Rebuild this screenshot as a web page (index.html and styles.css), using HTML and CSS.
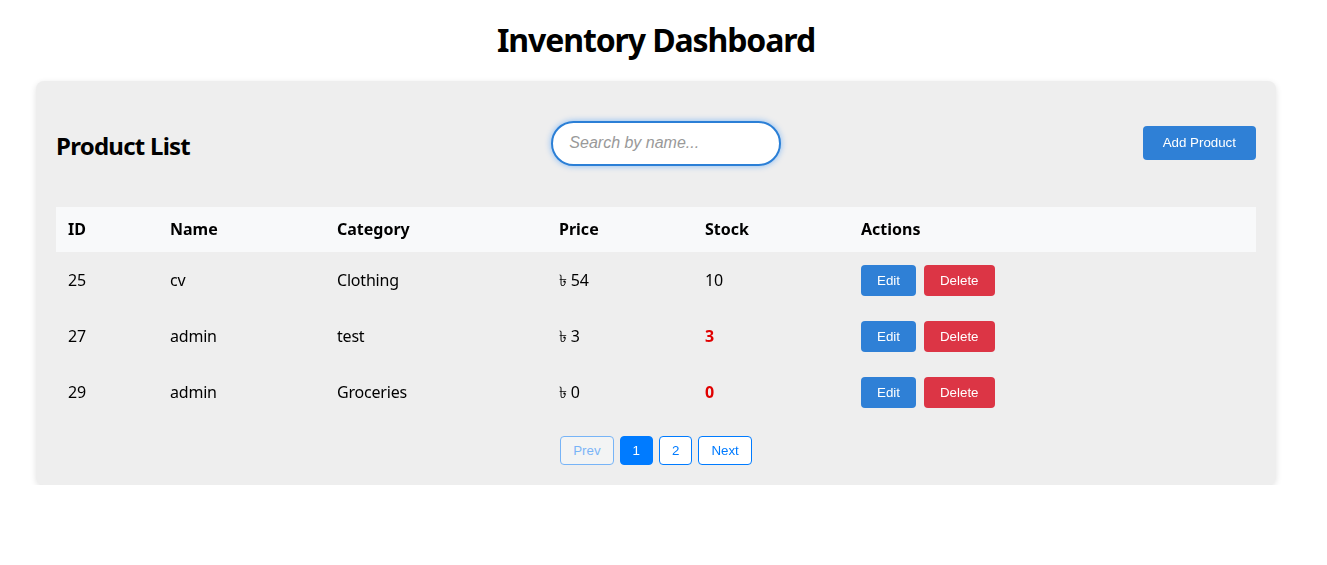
FILE: index.html
```html
<!DOCTYPE html>
<html lang="en">
<head>
<meta charset="utf-8">
<title>Inventory Dashboard</title>
<link rel="stylesheet" href="styles.css">
</head>
<body>
<div class="page">
  <h1 class="title">Inventory Dashboard</h1>
  <div class="card">
    <div class="card-header">
      <h2 class="card-title">Product List</h2>
      <input class="search" type="text" placeholder="Search by name..." autofocus>
      <button class="btn btn-add">Add Product</button>
    </div>
    <table class="table">
      <colgroup>
        <col class="c-id"><col class="c-name"><col class="c-cat"><col class="c-price"><col class="c-stock"><col class="c-act">
      </colgroup>
      <thead>
        <tr><th>ID</th><th>Name</th><th>Category</th><th>Price</th><th>Stock</th><th>Actions</th></tr>
      </thead>
      <tbody>
        <tr>
          <td>25</td><td>cv</td><td>Clothing</td><td>৳ 54</td><td>10</td>
          <td><div class="actions"><button class="btn btn-edit">Edit</button><button class="btn btn-delete">Delete</button></div></td>
        </tr>
        <tr>
          <td>27</td><td>admin</td><td>test</td><td>৳ 3</td><td class="low">3</td>
          <td><div class="actions"><button class="btn btn-edit">Edit</button><button class="btn btn-delete">Delete</button></div></td>
        </tr>
        <tr>
          <td>29</td><td>admin</td><td>Groceries</td><td>৳ 0</td><td class="low">0</td>
          <td><div class="actions"><button class="btn btn-edit">Edit</button><button class="btn btn-delete">Delete</button></div></td>
        </tr>
      </tbody>
    </table>
    <div class="pagination">
      <button class="page-btn" disabled>Prev</button>
      <button class="page-btn active">1</button>
      <button class="page-btn">2</button>
      <button class="page-btn">Next</button>
    </div>
  </div>
</div>
</body>
</html>
```

FILE: styles.css
```css
* { box-sizing: border-box; }
html, body { margin: 0; padding: 0; background: #fff; }
body {
  font-family: "Noto Sans", "Open Sans", sans-serif;
  color: #000;
}
.page {
  width: 1312px;
  padding-top: 19px;
}
.title {
  margin: 0 0 20px;
  text-align: center;
  font-size: 32px;
  line-height: 42px;
  font-weight: 700;
  letter-spacing: -1.1px;
}
.card {
  width: 1240px;
  margin: 0 auto;
  background: #eeeeee;
  border-radius: 8px;
  box-shadow: 0 2px 6px rgba(0,0,0,0.12);
  padding: 20px;
}
.card-header {
  display: flex;
  align-items: center;
  justify-content: space-between;
  height: 86px;
  margin-bottom: 20px;
}
.card-title {
  margin: 0;
  font-size: 24px;
  font-weight: 700;
  letter-spacing: -0.75px;
  padding-top: 2px;
}
.search {
  width: 230px;
  height: 45px;
  border: 2px solid #2b7fd6;
  border-radius: 25px;
  padding: 0 16px;
  font-family: "Liberation Sans", Arial, sans-serif;
  font-size: 16px;
  outline: none;
  box-shadow: 0 0 6px rgba(0,123,255,0.45);
  background: #fff;
  margin-top: -2px;
}
.search::placeholder { color: #999; font-style: italic; }
.btn {
  font-family: "Liberation Sans", Arial, sans-serif;
  font-size: 13.333px;
  line-height: 15px;
  color: #fff;
  border: none;
  border-radius: 4px;
  cursor: pointer;
}
.btn-add {
  background: #2f80d6;
  padding: 9.5px 20px;
  margin-top: -3px;
}
.table {
  width: 100%;
  border-collapse: collapse;
  table-layout: fixed;
  font-size: 16px;
}
.c-id { width: 102px; }
.c-name { width: 167px; }
.c-cat { width: 222px; }
.c-price { width: 146px; }
.c-stock { width: 156px; }
.c-act { width: auto; }
.table th {
  background: #f8f9fa;
  text-align: left;
  font-weight: 700;
  padding: 12px;
  line-height: 21px;
  border-bottom: 1px solid #eeeeee;
}
.table td {
  padding: 12px;
  line-height: 21px;
  border-bottom: 1px solid #eeeeee;
  vertical-align: middle;
  letter-spacing: -0.2px;
}
.table td.low { color: #e00000; font-weight: 700; }
.actions { display: flex; gap: 8px; }
.btn-edit { background: #2f80d6; padding: 8px 16px; }
.btn-delete { background: #dc3545; padding: 8px 16px; }
.pagination {
  display: flex;
  justify-content: center;
  gap: 6px;
  margin-top: 15px;
}
.page-btn {
  font-family: "Liberation Sans", Arial, sans-serif;
  font-size: 13.333px;
  line-height: 15px;
  padding: 6px 12px;
  border: 1px solid #007bff;
  border-radius: 4px;
  background: #fff;
  color: #007bff;
}
.page-btn.active { background: #007bff; color: #fff; }
.page-btn:disabled { opacity: 0.5; background: #f8f9fa; }
```
